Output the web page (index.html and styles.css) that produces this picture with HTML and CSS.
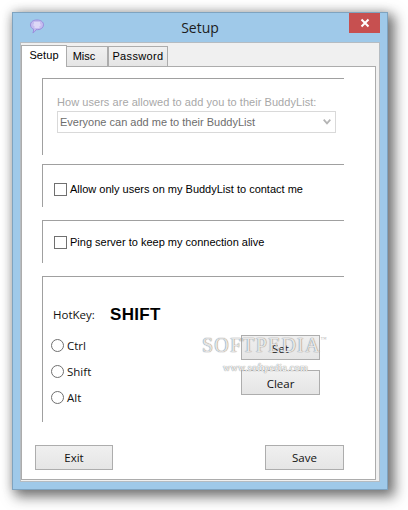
FILE: index.html
```html
<!DOCTYPE html>
<html lang="en">
<head>
<meta charset="utf-8">
<title>Setup</title>
<link rel="stylesheet" href="styles.css">
</head>
<body>
<div class="window">
  <header class="titlebar">
    <svg class="app-icon" width="16" height="16" viewBox="0 0 16 16">
      <path d="M8 1c3.800 0 6.500 2 6.500 4.800S11.800 10.700 8.700 10.700c-.6 0-1.100 0-1.600-.1-.7 1.400-1.900 2.600-3.200 3.200.6-1.100.8-2.200.7-3.600C2.800 9.500 1.500 7.900 1.500 5.800 1.500 3 4.200 1 8 1z" fill="#c6bdf0" stroke="#9a8ddc" stroke-width="1"/>
      <path d="M5 4h6M4.500 6h7M5.500 8h5" stroke="#f4f2fd" stroke-width="1"/>
    </svg>
    <span class="title">Setup</span>
    <span class="close"><svg width="10" height="10" viewBox="0 0 10 10"><path d="M1.500 1.500l7 7M8.500 1.500l-7 7" stroke="#fff" stroke-width="2"/></svg></span>
  </header>
  <div class="client">
    <nav class="tabs">
      <span class="tab active">Setup</span>
      <span class="tab misc">Misc</span>
      <span class="tab password">Password</span>
    </nav>
    <main class="pane">
      <section class="group g1">
        <div class="disabled-label">How users are allowed to add you to their BuddyList:</div>
        <div class="select">
          <span>Everyone can add me to their BuddyList</span>
          <svg width="8" height="6" viewBox="0 0 8 6"><path d="M.7.700L4 4.300 7.300.700" fill="none" stroke="#b4b4b4" stroke-width="1.800"/></svg>
        </div>
      </section>
      <section class="group g2">
        <label class="check"><span class="box"></span>Allow only users on my BuddyList to contact me</label>
      </section>
      <section class="group g3">
        <label class="check"><span class="box"></span>Ping server to keep my connection alive</label>
      </section>
      <section class="group g4">
        <div class="hotkey"><span class="hk-label">HotKey:</span><strong class="hk-value">SHIFT</strong></div>
        <div class="hk-body">
          <div class="radios">
            <label class="radio"><span class="dot"></span>Ctrl</label>
            <label class="radio"><span class="dot"></span>Shift</label>
            <label class="radio"><span class="dot"></span>Alt</label>
          </div>
          <div class="hk-buttons">
            <button class="btn small">Set</button>
            <button class="btn small">Clear</button>
          </div>
        </div>
      </section>
      <footer class="actions">
        <button class="btn exit">Exit</button>
        <button class="btn save">Save</button>
      </footer>
    </main>
  </div>
  <div class="watermark"><div class="wm-big">SOFTPEDIA<sup>™</sup></div><div class="wm-small">www.softpedia.com</div></div>
</div>
</body>
</html>
```
FILE: styles.css
```css
* { box-sizing: border-box; }
html, body { margin: 0; padding: 0; background: #fff; }
body { width: 408px; height: 510px; overflow: hidden; padding: 12px 0 0 12px; font-family: "Liberation Sans", Arial, sans-serif; }

.window {
  position: relative;
  width: 376px;
  height: 478px;
  background: #9fc9e9;
  border: 1px solid #7fa3bf;
  box-shadow: 5px 5px 12px 2px rgba(40,40,40,.6), 0 0 10px rgba(0,0,0,.18);
  padding: 0 7px 7px 7px;
  display: flex;
  flex-direction: column;
}

.titlebar { position: relative; height: 29px; flex: none; display: flex; justify-content: center; align-items: center; }
.app-icon { position: absolute; left: 9px; top: 6px; }
.title { font-family: "Open Sans", sans-serif; font-size: 14px; color: #1c1c1c; }
.close { position: absolute; right: 0; top: 0; width: 31px; height: 20px; background: #c75050; display: flex; align-items: center; justify-content: center; }

.client { flex: 1; background: #f0f0f0; border: 1px solid #b5bcc2; display: flex; flex-direction: column; position: relative; }

.tabs { height: 23px; flex: none; display: flex; align-items: flex-end; padding-left: 0; }
.tab { height: 20px; padding-bottom: 2px; border: 1px solid #acacac; border-bottom: none; background: linear-gradient(#f0f0f0,#e5e5e5); font-size: 11px; color: #000; display: flex; align-items: center; justify-content: center; }
.misc { width: 41px; padding-right: 6px; border-left: none; }
.password { width: 60px; letter-spacing: .35px; }
.tab.active { width: 46px; height: 22px; background: #fff; position: relative; top: 1px; z-index: 1; letter-spacing: .1px; padding-bottom: 3px; }

.pane { flex: 1; margin: 0 3px 1px 0; background: #fff; border: 1px solid #acacac; padding: 11px 0 0 20px; position: relative; }

.group { width: 302px; border-top: 1px solid #a0a0a0; border-left: 1px solid #a0a0a0; }
.g1 { height: 77px; margin-bottom: 9px; padding: 16px 0 0 14px; }
.g2 { height: 43px; margin-bottom: 13px; padding-top: 17px; padding-left: 11px; }
.g3 { height: 43px; margin-bottom: 13px; padding-top: 14px; padding-left: 11px; }
.g4 { height: 146px; padding: 27px 0 0 10px; }

.disabled-label { font-size: 11px; letter-spacing: .05px; color: #a8a8a8; height: 14px; line-height: 14px; }
.select { width: 279px; height: 22px; margin-top: 2px; border: 1px solid #d9d9d9; background: #fff; display: flex; align-items: center; justify-content: space-between; padding: 0 4px 0 2px; font-size: 11px; color: #6d6d6d; }

.check { display: flex; align-items: center; font-size: 11px; color: #000; height: 14px; }
.box { width: 13px; height: 13px; border: 1px solid #707070; background: #fff; margin-right: 3px; flex: none; }

.hotkey { display: flex; align-items: center; height: 20px; font-family: "Open Sans", sans-serif; }
.hk-label { font-size: 11.500px; color: #111; width: 57px; }
.hk-value { font-family: "Liberation Sans", sans-serif; font-size: 17px; font-weight: 700; color: #000; letter-spacing: .3px; position: relative; top: 1px; }

.hk-body { display: flex; position: relative; }
.radios { display: flex; flex-direction: column; width: 171px; margin-left: -2px; padding-top: 14px; gap: 12px; }
.radio { display: flex; align-items: center; height: 14px; font-family: "Open Sans", sans-serif; font-size: 11.500px; color: #111; }
.dot { width: 13px; height: 13px; border: 1px solid #707070; border-radius: 50%; margin-right: 3px; flex: none; background: #fff; }
.hk-buttons { display: flex; flex-direction: column; gap: 10px; padding-top: 11px; margin-left: 19px; }

.btn { border: 1px solid #adadad; background: linear-gradient(#f0f0f0,#e5e5e5); font-family: "Open Sans", sans-serif; font-size: 11.500px; color: #111; padding: 0; height: 25px; border-radius: 0; display: block; }
.small { width: 79px; padding-top: 1px; }
.actions { display: flex; justify-content: space-between; width: 309px; margin: 23px 0 0 -7px; }
.exit { width: 78px; }
.save { width: 79px; }

.watermark { position: absolute; left: 189px; top: 320px; width: 135px; pointer-events: none; font-family: "Liberation Serif", serif; }
.wm-big { font-size: 20px; letter-spacing: 1.2px; line-height: 24px; color: rgba(255,255,255,.8); text-shadow: 0 0 1px #888, 0 0 1px #888; white-space: nowrap; }
.wm-big sup { font-size: 6px; vertical-align: 11px; line-height: 0; color: #bbb; text-shadow: none; }
.wm-small { font-size: 10px; letter-spacing: .3px; margin: 5px 0 0 21px; color: #fff; text-shadow: 0 0 1px #888, 0 0 1px #888; white-space: nowrap; }
```
